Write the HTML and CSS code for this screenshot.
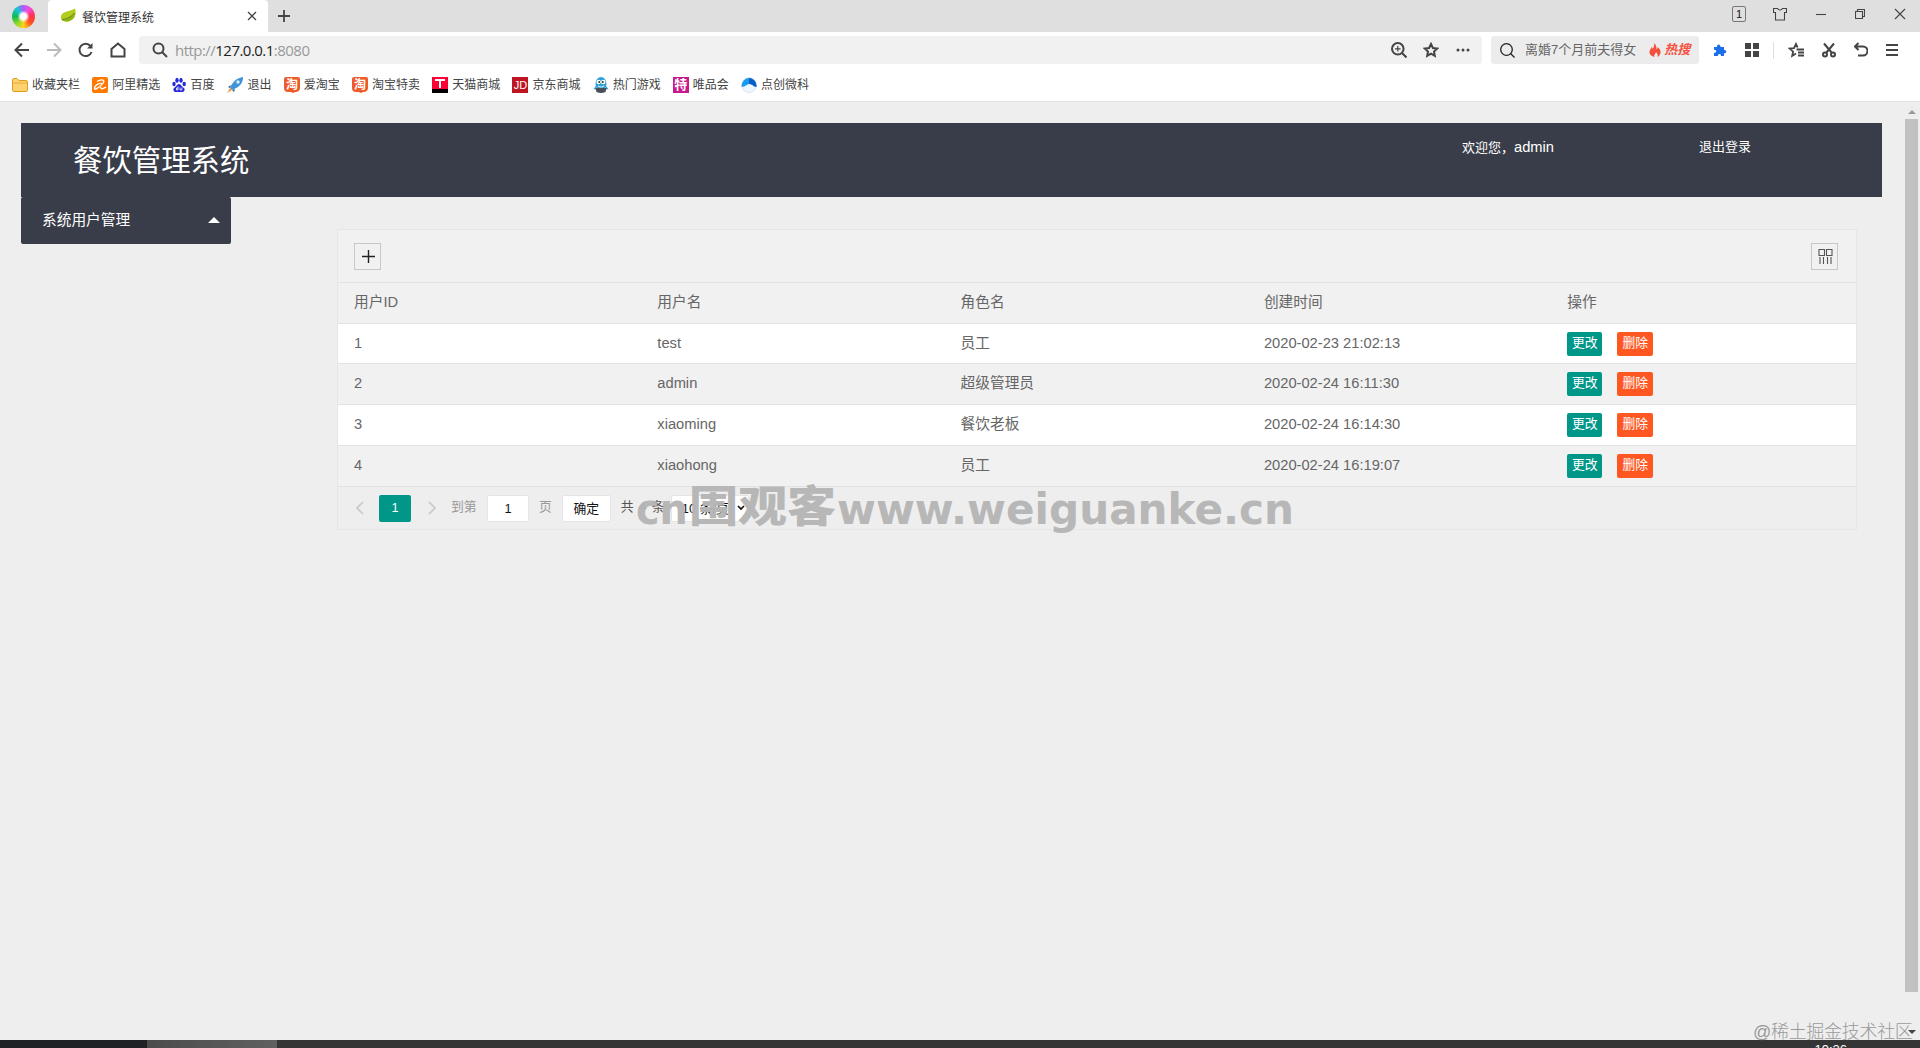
FILE: index.html
```html
<!DOCTYPE html>
<html lang="zh-CN">
<head>
<meta charset="utf-8">
<title>餐饮管理系统</title>
<link rel="stylesheet" href="styles.css">
</head>
<body>
<div class="tabs">
  <div class="brand"></div>
  <div class="tab">
    <svg width="17" height="16" viewBox="0 0 18 16"><path d="M1 11C0 3 8 4 16 0c1 4 1 9-3 12-4 3-10 3-12-1z" fill="#b4cc1c"/><path d="M2 12C7 12 12 9 16 4c0 8-8 12-14 8z" fill="#8fb41a"/><path d="M2 12c6-1 10-3 13-7" stroke="#5c8712" fill="none"/></svg>
    <span>餐饮管理系统</span>
    <svg class="tab-close" width="10" height="10" viewBox="0 0 10 10"><path d="M1 1l8 8M9 1L1 9" stroke="#444" stroke-width="1.3"/></svg>
  </div>
  <svg class="plus" width="12" height="12" viewBox="0 0 12 12"><path d="M6 0v12M0 6h12" stroke="#444" stroke-width="1.8"/></svg>
  <div class="window-tools">
    <span class="count">1</span>
    <svg width="14" height="14" viewBox="0 0 14 14"><path d="M.5 1.500h4c1 2 4 2 5 0h4v4h-2v7.500h-9V5.500h-2z"/></svg>
    <svg width="10" height="14" viewBox="0 0 10 14"><path d="M0 7.500h10"/></svg>
    <svg width="10" height="14" viewBox="0 0 10 14"><path d="M.5 4.500h7v7h-7zM2.500 4.500v-2h7v7h-2"/></svg>
    <svg width="12" height="14" viewBox="0 0 12 14"><path d="M1 2l10 10M11 2L1 12"/></svg>
  </div>
</div>
<div class="toolbar">
  <div class="nav">
    <svg width="16" height="16" viewBox="0 0 16 16"><path d="M15 8H2M8 1.500L1.500 8 8 14.500"/></svg>
    <svg class="off" width="16" height="16" viewBox="0 0 16 16"><path d="M1 8h13M8 1.500L14.500 8 8 14.500"/></svg>
    <svg width="16" height="16" viewBox="0 0 16 16"><path d="M13.500 10A6.200 6.200 0 1 1 12.500 4"/><path d="M9 6.500h5.500V1z" fill="#444" stroke="none"/></svg>
    <svg width="16" height="16" viewBox="0 0 16 16"><path d="M1.500 14.500h13V7L8 1.500 1.500 7z"/></svg>
  </div>
  <div class="address">
    <svg width="16" height="16" viewBox="0 0 16 16"><circle cx="6.500" cy="6.500" r="5"/><path d="M10 10l5 5"/></svg>
    <span class="url">http://<b>127.0.0.1</b>:8080</span>
    <svg class="zoom-in" width="16" height="16" viewBox="0 0 16 16"><circle cx="6.800" cy="6.800" r="5.800"/><path d="M11 11l4.500 4.500"/><path d="M4 6.800h5.600M6.800 4v5.600" stroke-width="1.200"/></svg>
    <svg width="16" height="16" viewBox="0 0 16 16"><path d="M8 2l1.900 4 4.300.5-3.200 3 .8 4.400L8 11.700l-3.800 2.200.8-4.400-3.200-3 4.300-.5z"/></svg>
    <svg width="16" height="16" viewBox="0 0 16 16"><g fill="#444" stroke="none"><circle cx="3" cy="8" r="1.500"/><circle cx="8" cy="8" r="1.500"/><circle cx="13" cy="8" r="1.500"/></g></svg>
  </div>
  <div class="search">
    <svg width="15" height="15" viewBox="0 0 15 15"><circle cx="6.500" cy="6.500" r="5.800" stroke-width="1.300"/><path d="M10.500 10.500l4 4" stroke-width="1.300"/></svg>
    <span class="query">离婚7个月前夫得女</span>
    <svg class="flame" width="14" height="14" viewBox="0 0 12 14"><path d="M5 0c2 2 3 4 2 6 1 0 1.500-1 1.500-2C11 6 12 8 11.500 10c-.5 2-1.500 3-3 4 .5-2 0-3.500-1.500-5-.5 2-2.500 3-1.500 5C2 13 0 11 .5 8.500 1 6.500 2 6 2.500 4c1 .5 1 1 1 2C5 4.500 5.500 2 5 0z" fill="#f5503e" stroke="none"/></svg>
    <span class="hot">热搜</span>
  </div>
  <div class="actions">
    <svg width="14" height="14" viewBox="0 0 14 14"><path d="M1 4h3.200C3 .5 8 .5 7.500 4H11v3c3-.8 3 4 0 3.200V13H8c.5-2.800-3.500-2.800-3 0H1V9.800c3 .5 3-3.500 0-3z" fill="#1b6fe8" stroke="none"/></svg>
    <svg class="apps" width="14" height="14" viewBox="0 0 14 14"><path d="M0 0h6v6H0zM8 0h6v6H8zM0 8h6v6H0zM8 8h6v6H8z" fill="#444" stroke="none"/></svg>
    <i class="split"></i>
    <svg width="16" height="16" viewBox="0 0 16 16"><path d="M8 11.500l-3.800 2.400.9-4.200L1.500 6.500l4.500-.4L8 2l1.600 3.500M8.500 7.500H16M10 10.500h6M10 13.500h6" stroke-width="1.800"/></svg>
    <svg width="14" height="16" viewBox="0 0 14 16"><path d="M2 1.500l8 9.500M12 1.500L4 11"/><circle cx="3" cy="12.500" r="2"/><circle cx="11" cy="12.500" r="2"/></svg>
    <svg width="14" height="16" viewBox="0 0 14 16"><path d="M1 4.500h8a4.500 4.500 0 0 1 0 9H4M4.500 1L1 4.500 4.500 8"/></svg>
    <svg width="12" height="14" viewBox="0 0 12 14"><path d="M0 2h12M0 7h12M0 12h12"/></svg>
  </div>
</div>
<div class="bookmarks">
  <a><svg width="16" height="16" viewBox="0 0 16 16"><path d="M.5 3q0-1.500 1.500-1.500h3l2 2h7q1.500 0 1.500 1.500v8q0 1.500-1.500 1.500H2Q.5 14.500.5 13z" fill="#ffd271" stroke="#dc9d22"/><path d="M1 6h14" stroke="#e8ab38"/></svg>收藏夹栏</a>
  <a><svg width="16" height="16" viewBox="0 0 16 16"><rect width="16" height="16" rx="2" fill="#ff7900"/><path d="M5 4.500c4-2.500 8-2 6.500 1C10 8 7 10.500 4 12c-2 .8-2-1-.5-3C5 7 8 6 9.500 6.500M8.500 10c0 2.500 3 2 5.500 0" fill="none" stroke="#fff" stroke-width="1.400"/></svg>阿里精选</a>
  <a><svg width="14" height="16" viewBox="0 0 14 16"><g fill="#2529d8"><ellipse cx="2" cy="7" rx="1.700" ry="2.300"/><ellipse cx="5" cy="3.300" rx="1.700" ry="2.500"/><ellipse cx="9" cy="3.300" rx="1.700" ry="2.500"/><ellipse cx="12.200" cy="7" rx="1.700" ry="2.300"/><path d="M7 7c2 0 3 3 5 4 1.500 2 0 4-2 4H4c-2 0-3.500-2-2-4 2-1 3-4 5-4z"/></g><path d="M6 9.500V13H4.500v-2H6M8 10.500V13h1.800v-2.500" stroke="#fff" fill="none" stroke-width=".8"/></svg>百度</a>
  <a><svg width="17" height="16" viewBox="0 0 17 16"><path d="M4 8L1 10l2 1M8 12l-1 3-2-2" fill="#315d96"/><path d="M16 0C10 1 6 4 3 11l2 2c7-3 11-6 11-13z" fill="#3f94d7"/><circle cx="11" cy="5" r="1.700" fill="#d4f0ff"/><path d="M3 11l-3 5 5-3z" fill="#f49b36"/></svg>退出</a>
  <a><svg class="tao" width="16" height="16" viewBox="0 0 16 16"><path d="M2 0h12q2 0 2 2v9q0 4-5 4l-2 1-2-1H4q-4 0-4-4V2q0-2 2-2z"/><text x="8" y="12">淘</text></svg>爱淘宝</a>
  <a><svg class="tao" width="16" height="16" viewBox="0 0 16 16"><path d="M2 0h12q2 0 2 2v9q0 4-5 4l-2 1-2-1H4q-4 0-4-4V2q0-2 2-2z"/><text x="8" y="12">淘</text></svg>淘宝特卖</a>
  <a><svg width="16" height="16" viewBox="0 0 16 16"><path d="M0 0h16v16H0z" fill="#ff0036"/><path d="M0 12h16v4H0z" fill="#000"/><path d="M3 3h10M8 3v8" stroke="#fff" stroke-width="2"/></svg>天猫商城</a>
  <a><span class="square jd">JD</span>京东商城</a>
  <a><svg width="16" height="16" viewBox="0 0 16 16"><ellipse cx="8" cy="7" rx="5.500" ry="7" fill="#31a1d5"/><path d="M3 9L.5 12 3 12.500M13 9l2.500 3-2.500.5" fill="#31a1d5"/><path d="M2.500 11h11l-1 4q-4.500 2-9 0z" fill="#4a4e58"/><circle cx="5.700" cy="5" r="2.200" fill="#fff"/><circle cx="10.300" cy="5" r="2.200" fill="#fff"/><circle cx="6.200" cy="5" r=".9" fill="#222"/><circle cx="9.800" cy="5" r=".9" fill="#222"/><path d="M5 9q3 2 6 0" stroke="#d9eaf4" stroke-width="1.200"/></svg>热门游戏</a>
  <a><span class="square vip">特</span>唯品会</a>
  <a><svg width="16" height="16" viewBox="0 0 16 16"><circle cx="8" cy="8" r="7.500" fill="#eef6ff" stroke="#dbe7f1"/><path d="M.5 9.500a7.500 8.500 0 0 1 15 0c-2.500 1-3.500-2.500-7-2.500s-5 4-8 2.500z" fill="#1a9bf2"/><path d="M8 1a7.500 8 0 0 1 7.500 8.500C12.500 10.500 12 7 8 7z" fill="#0b5fc4"/></svg>点创微科</a>
</div>
<div class="viewport">
  <main class="page">
    <header class="header"><h1>餐饮管理系统</h1><span class="welcome">欢迎您，<b>admin</b></span><a class="logout">退出登录</a></header>
    <div class="body">
      <aside class="menu"><span>系统用户管理</span><i></i></aside>
      <section class="panel">
        <div class="panel-tools">
          <button class="tool"><svg width="13" height="13" viewBox="0 0 13 13"><path d="M6.500 0v13M0 6.500h13" stroke="#222" stroke-width="1.400"/></svg></button>
          <button class="tool"><svg width="15" height="15" viewBox="0 0 15 15"><path d="M1 .5h5.500v6H1zM8.500.5H14v6H8.500zM2 8v7M5.500 8v7M9.500 8v7M13 8v7" fill="none" stroke="#555" stroke-width="1.100"/></svg></button>
        </div>
        <div class="row head"><span>用户ID</span><span>用户名</span><span>角色名</span><span>创建时间</span><span>操作</span></div>
        <div class="row first"><span>1</span><span>test</span><span>员工</span><span>2020-02-23 21:02:13</span><span class="ops"><a>更改</a><a class="del">删除</a></span></div>
        <div class="row even"><span>2</span><span>admin</span><span>超级管理员</span><span>2020-02-24 16:11:30</span><span class="ops"><a>更改</a><a class="del">删除</a></span></div>
        <div class="row"><span>3</span><span>xiaoming</span><span>餐饮老板</span><span>2020-02-24 16:14:30</span><span class="ops"><a>更改</a><a class="del">删除</a></span></div>
        <div class="row even"><span>4</span><span>xiaohong</span><span>员工</span><span>2020-02-24 16:19:07</span><span class="ops"><a>更改</a><a class="del">删除</a></span></div>
        <div class="pager">
          <svg width="8" height="14" viewBox="0 0 8 14"><path d="M7 1L1 7l6 6"/></svg>
          <span class="current">1</span>
          <svg width="8" height="14" viewBox="0 0 8 14"><path d="M1 1l6 6-6 6"/></svg>
          <span class="to">到第</span><span class="box num">1</span><span class="ye">页</span><span class="box ok">确定</span><span class="total">共 4 条</span>
          <span class="box limit">10 条/页<svg width="8" height="6" viewBox="0 0 8 6"><path d="M1 1l3 3 3-3"/></svg></span>
        </div>
      </section>
    </div>
  </main>
  <div class="scroll"><i class="up"></i><div class="thumb"></div><i class="down"></i></div>
</div>
<div class="taskbar"><div class="start"></div><div class="active"></div><div class="rest"><span>19:26</span></div></div>
<svg class="watermark" width="664" height="60" viewBox="0 0 664 60"><text x="0" y="42" textLength="52" lengthAdjust="spacingAndGlyphs">cn</text><text class="han" x="53" y="40" textLength="147" lengthAdjust="spacingAndGlyphs">围观客</text><text x="201" y="42" textLength="457" lengthAdjust="spacingAndGlyphs">www.weiguanke.cn</text></svg>
<div class="credit">@稀土掘金技术社区</div>
</body>
</html>
```
FILE: styles.css
```css
* { box-sizing: border-box; }
body { margin: 0; width: 1920px; height: 1048px; overflow: hidden; display: flex; flex-direction: column; background: #eee; color: #444; font-family: "Liberation Sans", "Noto Sans CJK SC", sans-serif; font-size: 12px; }
svg { flex: none; fill: none; }
.tabs { height: 32px; flex: none; display: flex; align-items: center; background: #dfdfdf; }
.brand { width: 23px; height: 23px; margin: 0 13px 0 12px; border-radius: 50%; background: radial-gradient(circle, #fff 0 3px, transparent 6px), conic-gradient(#b05cf5, #f04de0 35deg, #ff3658 80deg, #ff4a20 130deg, #ffd21e 180deg, #8ddb25 220deg, #12ba54 270deg, #18c3db 320deg, #b05cf5); }
.tab { width: 220px; height: 32px; padding: 0 11px 0 12px; display: flex; align-items: center; gap: 5px; background: #fff; border-radius: 4px 4px 0 0; color: #333; }
.tab-close { margin-left: auto; }
.plus { margin-left: 10px; }
.window-tools { margin: -4px 14px 0 auto; display: flex; align-items: center; }
.window-tools svg { stroke: #444; stroke-width: 1.1; margin-left: 29px; }
.window-tools svg:nth-child(2) { margin-left: 27px; }
.count { width: 14px; height: 16px; border: 1px solid #777; border-radius: 2px; line-height: 14px; text-align: center; color: #111; font-size: 11px; }
.toolbar { height: 36px; flex: none; display: flex; align-items: center; background: #fff; }
.toolbar svg { stroke: #444; stroke-width: 2; }
.nav { width: 139px; flex: none; padding-left: 14px; display: flex; gap: 16px; }
.nav .off { stroke: #bbb; }
.address { width: 1343px; flex: none; height: 28px; margin-right: 9px; padding: 0 11px 0 13px; display: flex; align-items: center; background: #f1f1f1; border-radius: 3px; }
.url { margin-left: 7px; margin-top: -1px; font: 15px "Open Sans", "Noto Sans", sans-serif; color: #999; letter-spacing: -.53px; }
.url b { font-weight: 400; color: #222; }
.address .zoom-in { margin-left: auto; }
.address svg + svg { margin-left: 16px; }
.search { width: 208px; flex: none; height: 28px; padding-left: 9px; display: flex; align-items: center; background: #ececec; border-radius: 3px; }
.search svg:first-child { stroke: #222; }
.query { margin-left: 10px; font-size: 13px; line-height: 18px; color: #666; white-space: nowrap; }
.flame { margin-left: 12px; }
.hot { margin-left: 2px; color: #f5503e; font-size: 13px; line-height: 18px; font-weight: 700; font-style: italic; white-space: nowrap; }
.actions { margin-left: 14px; display: flex; align-items: center; gap: 18px; }
.actions .split { width: 1px; height: 17px; margin: 0 -4px; background: #ddd; }
.bookmarks { height: 34px; flex: none; padding: 0 12px; display: flex; align-items: center; gap: 12.2px; background: #fff; border-bottom: 1px solid #e2e2e2; }
.bookmarks a { display: flex; align-items: center; gap: 4px; line-height: 16px; white-space: nowrap; }
.tao path { fill: #ee5b2b; }
.tao text { fill: #fff; font-size: 12px; font-weight: 700; text-anchor: middle; }
.square { width: 16px; height: 16px; line-height: 16px; text-align: center; color: #fff; }
.jd { background: #bd1522; font-size: 11px; }
.vip { background: #c8188e; font-weight: 700; font-size: 13px; line-height: 15px; }
.viewport { flex: 1; min-height: 0; display: flex; }
.page { flex: 1; padding: 21px 23px 0 21px; font-size: 14.7px; }
.header { height: 74px; padding: 0 131px 0 52px; display: flex; background: #393d49; color: #fff; font-size: 13px; }
.header > * { line-height: 48px; }
.header h1 { margin: 0 auto 0 0; font-size: 29.4px; line-height: 76px; font-weight: 400; }
.welcome { width: 237px; }
.welcome b { font-weight: 400; font-size: 14.7px; }
.logout { width: 52px; }
.body { display: flex; align-items: flex-start; gap: 106px; }
.menu { width: 210px; height: 47px; padding: 0 11px 2px 21px; display: flex; align-items: center; justify-content: space-between; background: #393d49; color: #fff; border-radius: 2px; line-height: 20px; }
.menu i { border: 6px solid transparent; border-top: 0; border-bottom-color: #fff; }
.panel { width: 1520px; margin-top: 32px; border: 1px solid #e6e6e6; color: #666; }
.panel-tools { height: 53px; padding: 0 18px 0 16px; display: flex; justify-content: space-between; align-items: center; background: #f1f1f1; border-bottom: 1px solid #e2e2e2; }
.tool { width: 27px; height: 27px; padding: 1px 0 0 1px; display: grid; place-items: center; background: none; border: 1px solid #c8c8c8; }
.row { height: 41px; display: grid; grid-template-columns: repeat(5, 303.3px); align-items: center; background: #fff; border-bottom: 1px solid #e2e2e2; line-height: 20px; }
.row.first { height: 40px; }
.row > span { padding-left: 16px; padding-bottom: 2px; }
.head, .even { background: #f1f1f1; }
.row .ops { display: flex; gap: 15px; padding-bottom: 0; }
.head > span { padding-bottom: 3px; }
.ops a { width: 35px; height: 24px; line-height: 22px; text-align: center; background: #009688; border-radius: 2px; color: #fff; font-size: 12.8px; }
.ops .del { width: 36px; background: #ff5722; }
.pager { height: 42px; padding: 0 0 0 18px; display: flex; align-items: center; color: #999; font-size: 12.8px; line-height: 20px; }
.pager svg { stroke: #c8c8c8; stroke-width: 1.7; }
.current { width: 32px; height: 27px; margin: 0 17px 0 15px; line-height: 25px; border-radius: 2px; text-align: center; background: #009688; color: #fff; }
.to, .ye, .total { padding-bottom: 2px; }
.to { margin-left: 15px; width: 36px; }
.box { height: 27px; line-height: 25px; text-align: center; background: #fff; border: 1px solid #e5e5e5; border-radius: 2px; color: #111; }
.num { width: 42px; }
.ye { margin: 0 10px; }
.ok { width: 49px; }
.total { margin-left: 10px; color: #555; word-spacing: 2px; width: 50px; white-space: nowrap; }
.limit { width: 78px; display: flex; align-items: center; justify-content: flex-end; padding-right: 3px; gap: 8px; white-space: nowrap; }
.limit svg { stroke: #111; }
.scroll { width: 15px; padding: 8px 2px 6px 0; display: flex; flex-direction: column; align-items: center; }
.scroll i { border: 4px solid transparent; }
.scroll .up { border-top: 0; border-bottom-color: #999; margin-bottom: 5px; }
.scroll .down { border-bottom: 0; border-top-color: #444; }
.thumb { width: 13px; height: 873px; margin-bottom: auto; background: #c1c1c1; }
.taskbar { height: 8px; flex: none; display: flex; overflow: hidden; }
.start { width: 147px; background: #202124; }
.active { width: 130px; background: linear-gradient(90deg, #4c4c4d, #606060); }
.rest { flex: 1; padding-right: 73px; background: #353536; text-align: right; color: #fff; font-size: 13px; line-height: 19px; }
.watermark { position: absolute; left: 636px; top: 482px; fill: #b5b5b5; opacity: .96; font: 700 43px "DejaVu Sans", sans-serif; }
.watermark .han { font: 900 43px "Noto Sans CJK SC", sans-serif; }
.credit { position: absolute; left: 1753px; top: 1019px; font: 300 18px/26px "Liberation Sans", "Noto Sans CJK SC", sans-serif; color: #999; white-space: nowrap; letter-spacing: -.3px; }
```
